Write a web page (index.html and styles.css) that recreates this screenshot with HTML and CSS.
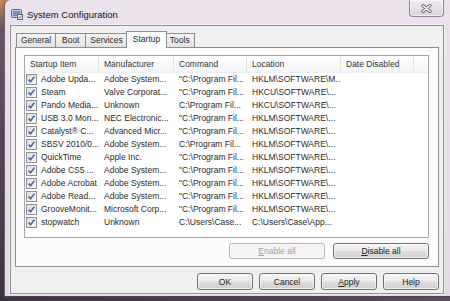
FILE: index.html
```html
<!DOCTYPE html>
<html lang="en">
<head>
  <meta charset="UTF-8">
  <title>System Configuration</title>
  <link rel="stylesheet" href="styles.css">
</head>
<body>
  <div class="window">
    <div class="titlebar">
      <svg class="appicon" width="12" height="11" viewBox="0 0 12 11">
        <rect x="0.5" y="0.5" width="10" height="8" rx="1" fill="#b9cde6" stroke="#4a6a9c"/>
        <rect x="2" y="2" width="7" height="5" fill="#6f93c8"/>
        <rect x="6.5" y="5.5" width="5" height="5" fill="#f4f4f4" stroke="#6d6d6d"/>
        <path d="M7.5 8 L8.6 9.2 L10.6 6.6" fill="none" stroke="#3d6bb0" stroke-width="1"/>
      </svg>
      <span class="title">System Configuration</span>
      <div class="close">
        <svg width="11" height="9" viewBox="0 0 11 9">
          <path d="M2 1.5 L9 7.5 M9 1.5 L2 7.5" stroke="#6a6470" stroke-width="3.2" stroke-linecap="round"/>
          <path d="M2 1.5 L9 7.5 M9 1.5 L2 7.5" stroke="#ffffff" stroke-width="1.4" stroke-linecap="round"/>
        </svg>
      </div>
    </div>

    <div class="client">
      <div class="tabs">
        <div class="tab">General</div>
        <div class="tab">Boot</div>
        <div class="tab">Services</div>
        <div class="tab active">Startup</div>
        <div class="tab">Tools</div>
      </div>

      <div class="panel">
        <div class="list">
          <div class="row head">
            <div class="cell">Startup Item</div>
            <div class="cell">Manufacturer</div>
            <div class="cell">Command</div>
            <div class="cell">Location</div>
            <div class="cell">Date Disabled</div>
            <div class="cell"></div>
          </div>
          <div id="rows"></div>
        </div>

        <div class="panel-buttons">
          <button class="btn wide" disabled><u>E</u>nable all</button>
          <button class="btn wide"><u>D</u>isable all</button>
        </div>
      </div>

      <div class="dialog-buttons">
        <button class="btn">OK</button>
        <button class="btn">Cancel</button>
        <button class="btn"><u>A</u>pply</button>
        <button class="btn">Help</button>
      </div>
    </div>
  </div>

  <script>
    const items = [
      ['Adobe Upda...', 'Adobe System...', '"C:\\Program Fil...', 'HKLM\\SOFTWARE\\M...'],
      ['Steam', 'Valve Corporat...', '"C:\\Program Fil...', 'HKCU\\SOFTWARE\\...'],
      ['Pando Media...', 'Unknown', 'C:\\Program Fil...', 'HKCU\\SOFTWARE\\...'],
      ['USB 3.0 Mon...', 'NEC Electronic...', '"C:\\Program Fil...', 'HKLM\\SOFTWARE\\...'],
      ['Catalyst® C...', 'Advanced Micr...', '"C:\\Program Fil...', 'HKLM\\SOFTWARE\\...'],
      ['SBSV 2010/0...', 'Adobe System...', 'C:\\Program Fil...', 'HKLM\\SOFTWARE\\...'],
      ['QuickTime', 'Apple Inc.', '"C:\\Program Fil...', 'HKLM\\SOFTWARE\\...'],
      ['Adobe CS5 ...', 'Adobe System...', '"C:\\Program Fil...', 'HKLM\\SOFTWARE\\...'],
      ['Adobe Acrobat', 'Adobe System...', '"C:\\Program Fil...', 'HKLM\\SOFTWARE\\...'],
      ['Adobe Read...', 'Adobe System...', '"C:\\Program Fil...', 'HKLM\\SOFTWARE\\...'],
      ['GrooveMonit...', 'Microsoft Corp...', '"C:\\Program Fil...', 'HKLM\\SOFTWARE\\...'],
      ['stopwatch', 'Unknown', 'C:\\Users\\Case...', 'C:\\Users\\Case\\App...']
    ];

    const check = '<svg class="chk" width="11" height="11" viewBox="0 0 11 11">' +
      '<defs><linearGradient id="g" x1="0" y1="0" x2="1" y2="1">' +
      '<stop offset="0" stop-color="#dcdcdc"/><stop offset="1" stop-color="#fbfbfb"/></linearGradient></defs>' +
      '<rect x="0.5" y="0.5" width="10" height="10" fill="url(#g)" stroke="#8e8f8f"/>' +
      '<path d="M2.6 5.6 L4.6 7.8 L8.4 2.6" fill="none" stroke="#4463a8" stroke-width="1.6"/></svg>';

    const rows = document.getElementById('rows');
    items.forEach(it => {
      const row = document.createElement('div');
      row.className = 'row';
      row.innerHTML =
        '<div class="cell first">' + check + '<span>' + it[0] + '</span></div>' +
        '<div class="cell">' + it[1] + '</div>' +
        '<div class="cell">' + it[2] + '</div>' +
        '<div class="cell">' + it[3] + '</div>' +
        '<div class="cell"></div><div class="cell"></div>';
      rows.appendChild(row);
    });
  </script>
</body>
</html>
```

FILE: styles.css
```css
html, body {
  margin: 0;
  padding: 0;
}
body {
  width: 450px;
  height: 301px;
  overflow: hidden;
  background: linear-gradient(135deg, #c48a52 0%, #6a5468 4%, #3e3340 40%, #5a4c5c 100%);
  font-family: "Liberation Sans", Arial, sans-serif;
  font-size: 8.5px;
  color: #2b2b2b;
}
.window {
  margin-left: 4px;
  height: 297px;
  box-sizing: border-box;
  background: linear-gradient(#ebe2ec, #e3d9e5);
  border-left: 1px solid #6a5e6d;
  border-bottom: 1px solid #4e4352;
  border-top-left-radius: 6px;
  padding: 0 6px 0 5px;
}
.titlebar {
  height: 25px;
  display: flex;
  align-items: flex-start;
}
.appicon {
  margin-top: 9px;
  margin-left: 1px;
}
.title {
  margin-top: 9px;
  margin-left: 4px;
  font-size: 9.5px;
  line-height: 12px;
  color: #111;
}
.close {
  margin-left: auto;
  margin-right: 0;
  width: 35px;
  height: 17px;
  box-sizing: border-box;
  border: 1px solid #8f8493;
  border-top: none;
  border-radius: 0 0 4px 4px;
  background: linear-gradient(#f1ebf2, #ddd2df);
  box-shadow: inset 0 0 0 1px rgba(255,255,255,0.6);
  display: flex;
  align-items: center;
  justify-content: center;
}
.client {
  height: 269px;
  box-sizing: border-box;
  background: #f0f0f0;
  border: 1px solid #978c9b;
  box-shadow: 0 0 0 1px rgba(255,255,255,0.5);
  padding: 5px 4px 0 4px;
}
.tabs {
  display: flex;
  height: 16px;
  padding-left: 1px;
  position: relative;
  z-index: 1;
}
.tab {
  margin-top: 2px;
  margin-left: -1px;
  padding: 0 4px;
  min-width: 31px;
  text-align: center;
  height: 14px;
  line-height: 13px;
  box-sizing: border-box;
  border: 1px solid #8c8e94;
  border-bottom: none;
  background: linear-gradient(#f4f4f4, #e2e2e2);
}
.tab:first-child {
  margin-left: 0;
}
.tab.active {
  margin-top: 0;
  height: 17px;
  padding: 0 6px;
  margin-left: -2px;
  margin-right: -2px;
  line-height: 15px;
  background: #fcfcfc;
  position: relative;
}
.panel {
  height: 220px;
  box-sizing: border-box;
  border: 1px solid #8c8e94;
  background: #fcfcfc;
  padding: 7px 9px 0 8px;
}
.list {
  height: 183px;
  box-sizing: border-box;
  border: 1px solid #a4a6aa;
  background: #ffffff;
  overflow: hidden;
}
.row {
  display: grid;
  grid-template-columns: 74px 75px 73px 94px 73px 1fr;
  height: 13px;
  line-height: 13px;
}
.row.head {
  height: 17px;
  line-height: 16px;
  background: linear-gradient(#ffffff, #f4f5f7);
  border-bottom: 1px solid #eceef1;
  box-sizing: border-box;
}
.row.head .cell {
  border-right: 1px solid #e2e4e8;
  color: #333;
}
.row.head .cell:last-child {
  border-right: none;
}
.cell {
  padding-left: 5px;
  white-space: nowrap;
  overflow: hidden;
}
.cell.first {
  padding-left: 1px;
  display: flex;
  align-items: center;
  gap: 4px;
}
.chk {
  flex: none;
}
.panel-buttons {
  display: flex;
  justify-content: flex-end;
  gap: 8px;
  margin-top: 5px;
}
.btn {
  width: 56px;
  height: 17px;
  padding: 0;
  box-sizing: border-box;
  border: 1px solid #707070;
  border-radius: 3px;
  background: linear-gradient(#f3f3f3 0%, #ebebeb 48%, #dddddd 52%, #cfcfcf 100%);
  box-shadow: inset 0 0 0 1px rgba(255,255,255,0.7);
  font-family: "Liberation Sans", Arial, sans-serif;
  font-size: 8.5px;
  color: #222;
}
.btn.wide {
  width: 96px;
  height: 16px;
}
.btn:disabled {
  border-color: #b3b5b8;
  background: #f4f4f4;
  color: #a3a3a3;
}
.dialog-buttons {
  display: flex;
  justify-content: flex-end;
  gap: 6px;
  margin-top: 6px;
}
```
